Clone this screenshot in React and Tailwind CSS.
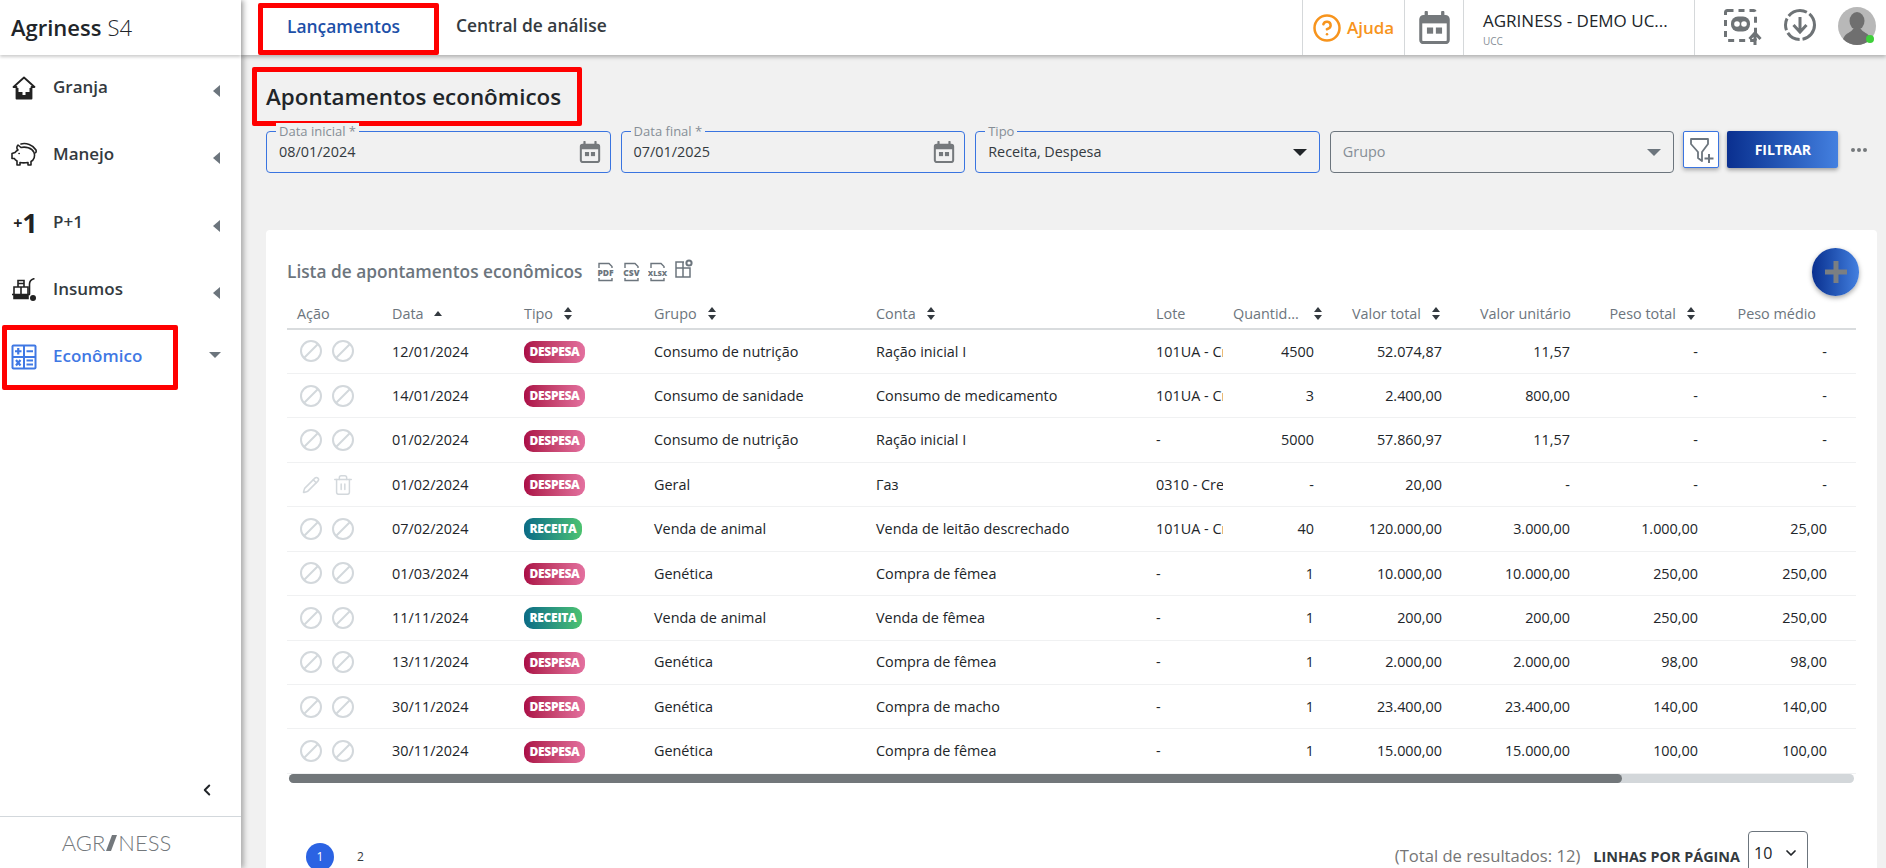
import { CircleHelp, Pencil, Trash2, ChevronDown, ChevronLeft } from 'lucide-react'

const rows = [
  { data: '12/01/2024', tipo: 'DESPESA', grupo: 'Consumo de nutrição', conta: 'Ração inicial I', lote: '101UA - Creche', qtd: '4500', total: '52.074,87', unit: '11,57', peso: '-', medio: '-' },
  { data: '14/01/2024', tipo: 'DESPESA', grupo: 'Consumo de sanidade', conta: 'Consumo de medicamento', lote: '101UA - Creche', qtd: '3', total: '2.400,00', unit: '800,00', peso: '-', medio: '-' },
  { data: '01/02/2024', tipo: 'DESPESA', grupo: 'Consumo de nutrição', conta: 'Ração inicial I', lote: '-', qtd: '5000', total: '57.860,97', unit: '11,57', peso: '-', medio: '-' },
  { data: '01/02/2024', tipo: 'DESPESA', grupo: 'Geral', conta: 'Газ', lote: '0310 - Creche', qtd: '-', total: '20,00', unit: '-', peso: '-', medio: '-', editable: true },
  { data: '07/02/2024', tipo: 'RECEITA', grupo: 'Venda de animal', conta: 'Venda de leitão descrechado', lote: '101UA - Creche', qtd: '40', total: '120.000,00', unit: '3.000,00', peso: '1.000,00', medio: '25,00' },
  { data: '01/03/2024', tipo: 'DESPESA', grupo: 'Genética', conta: 'Compra de fêmea', lote: '-', qtd: '1', total: '10.000,00', unit: '10.000,00', peso: '250,00', medio: '250,00' },
  { data: '11/11/2024', tipo: 'RECEITA', grupo: 'Venda de animal', conta: 'Venda de fêmea', lote: '-', qtd: '1', total: '200,00', unit: '200,00', peso: '250,00', medio: '250,00' },
  { data: '13/11/2024', tipo: 'DESPESA', grupo: 'Genética', conta: 'Compra de fêmea', lote: '-', qtd: '1', total: '2.000,00', unit: '2.000,00', peso: '98,00', medio: '98,00' },
  { data: '30/11/2024', tipo: 'DESPESA', grupo: 'Genética', conta: 'Compra de macho', lote: '-', qtd: '1', total: '23.400,00', unit: '23.400,00', peso: '140,00', medio: '140,00' },
  { data: '30/11/2024', tipo: 'DESPESA', grupo: 'Genética', conta: 'Compra de fêmea', lote: '-', qtd: '1', total: '15.000,00', unit: '15.000,00', peso: '100,00', medio: '100,00' },
]

function HouseIcon() {
  return (
    <svg width="24" height="24" viewBox="0 0 24 24" fill="none">
      <path d="M1.5 11 12 1.5 22.5 11H19.5V22.5H4.5V11Z" stroke="#222" strokeWidth="1.8" strokeLinejoin="round" />
      <path d="M4.5 12H19.5V23H4.5Z" fill="#222" />
      <path d="M6.5 11.5H17.5V16H13.5V19H10.5V16H6.5Z" fill="#fff" />
    </svg>
  )
}

function PigIcon() {
  return (
    <svg width="28" height="26" viewBox="0 0 28 26" fill="none" stroke="#222" strokeWidth="1.6" strokeLinejoin="round" strokeLinecap="round">
      <path d="M8 8C6 6.5 7 4 8 3L11 5.5C15 4.5 22 5.5 24 10.5C25.5 14 24 18 21 19.5V23H18V20.5C15 21 12 21 10 20.5V23H7V19C5.5 18 4.5 17 4.5 16.5H2V11.5L5 10.5C5.8 9.5 6.8 8.7 8 8Z" />
      <path d="M11 2C16 0.5 23 3 26 8C26.5 9.5 26 11 25 11" />
      <path d="M9 11.5H9.2" />
    </svg>
  )
}

function CartIcon() {
  return (
    <svg width="26" height="24" viewBox="0 0 26 24" fill="none" stroke="#222" strokeWidth="1.6">
      <path d="M1 16.5H19M3 20.5H17V16.5H3Z" fill="#222" />
      <path d="M3 16V9H17V16M7 9V2.5H13V9M10 9V16M7 2.5V5.5H13V2.5" />
      <path d="M18.5 16.5V6C18.5 3.5 20 1.5 23.5 0.5" />
      <circle cx="22" cy="20" r="3" fill="#222" stroke="none" />
    </svg>
  )
}

function CalcIcon() {
  return (
    <svg width="26" height="26" viewBox="0 0 26 26" fill="none">
      <rect x="0.5" y="0.5" width="25" height="25" rx="2" fill="#3f78e4" />
      <rect x="2.5" y="2.5" width="9.5" height="9.5" fill="#fff" />
      <rect x="14" y="2.5" width="9.5" height="9.5" fill="#fff" />
      <rect x="2.5" y="14" width="9.5" height="9.5" fill="#fff" />
      <rect x="14" y="14" width="9.5" height="9.5" fill="#fff" />
      <path d="M7.25 4V10.5M4 7.25H10.5M15.5 7.25H22M5 16 9.5 21.5M9.5 16 5 21.5M15.5 16.5H22M15.5 20.5H22" stroke="#3f78e4" strokeWidth="2.2" />
    </svg>
  )
}

function CalendarIcon({ size = 22 }) {
  return (
    <svg width={size} height={size} viewBox="0 0 24 24" fill="none">
      <path d="M6 1V6M18 1V6" stroke="#75797c" strokeWidth="2.4" strokeLinecap="round" />
      <rect x="2" y="4" width="20" height="19" rx="2" stroke="#75797c" strokeWidth="2.2" />
      <rect x="2" y="4" width="20" height="5" fill="#75797c" />
      <rect x="6.5" y="12" width="4.5" height="4.5" fill="#75797c" />
      <rect x="13" y="12" width="4.5" height="4.5" fill="#75797c" />
    </svg>
  )
}

function BanIcon() {
  return (
    <svg width="22" height="22" viewBox="0 0 22 22" fill="none" stroke="#d3d8dc" strokeWidth="2">
      <circle cx="11" cy="11" r="10" />
      <path d="M4 18 18 4" />
    </svg>
  )
}

function SortIcon() {
  return (
    <svg width="8" height="13" viewBox="0 0 8 13" fill="#343a40" className="shrink-0">
      <path d="M4 0 8 5H0Z" />
      <path d="M4 13 0 8H8Z" />
    </svg>
  )
}

function FileIcon({ label }) {
  return (
    <svg width="20" height="20" viewBox="0 0 20 20" fill="none">
      <path d="M3 6V1.5H13L16 4.5V6M3 16V18.5H16V16" stroke="#6c757d" strokeWidth="1.4" />
      <text x="9.5" y="14" textAnchor="middle" fontSize={label === 'XLSX' ? 7.5 : 8.5} fontWeight="800" fill="#6c757d" fontFamily="'Open Sans', sans-serif">{label}</text>
    </svg>
  )
}

function Field({ label, value, active = true, children }) {
  return (
    <div className={`relative flex h-[42px] w-[344.6px] items-center justify-between rounded-[4px] border pl-[12px] pr-[9px] ${active ? 'border-[#3a74e0]' : 'border-[#6c757d]'}`}>
      {label && <span className="absolute -top-[9px] left-[9px] bg-[#f1f1f1] px-[3px] text-[13px] leading-[17px] text-[#868e96]">{label}</span>}
      <span className={`text-[14.4px] ${active ? 'text-[#343a40]' : 'text-[#868e96]'}`}>{value}</span>
      {children}
    </div>
  )
}

function NavItem({ icon, label, active, open }) {
  return (
    <div className="relative flex h-[67.3px] items-start">
      <div className="mr-[5px] mt-[21px] flex h-6 w-[48px] shrink-0 items-center justify-center">{icon}</div>
      <span className={`mt-[21px] text-[17px] font-semibold leading-[22px] ${active ? 'text-[#3f78e4]' : 'text-[#343a40]'}`}>{label}</span>
      {open ? (
        <span className="absolute left-[209px] top-[28px] h-0 w-0 border-x-[6.5px] border-t-[6px] border-x-transparent border-t-[#6c757d]" />
      ) : (
        <span className="absolute left-[213px] top-[30px] h-0 w-0 border-y-[6px] border-r-[7px] border-y-transparent border-r-[#6c757d]" />
      )}
      {active && <span className="absolute left-[2px] top-[1px] h-[65px] w-[176px] rounded-[2px] border-[5px] border-[#ff0000]" />}
    </div>
  )
}

function Badge({ tipo }) {
  if (tipo === 'RECEITA') {
    return <span className="inline-flex h-[22px] w-[58px] items-center justify-center rounded-[9px] bg-gradient-to-r from-[#0b6b85] to-[#4cc26f] text-[12px] font-extrabold tracking-[-0.3px] text-white">RECEITA</span>
  }
  return <span className="inline-flex h-[22px] w-[61px] items-center justify-center rounded-[9px] bg-gradient-to-r from-[#ab0b47] to-[#e3709f] text-[12px] font-extrabold tracking-[-0.3px] text-white">DESPESA</span>
}

function App() {
  return (
    <div className="flex h-screen overflow-hidden bg-[#f1f1f1] font-['Open_Sans',sans-serif] text-[#212529]">
      {/* sidebar */}
      <aside className="z-20 flex w-[241px] shrink-0 flex-col bg-white shadow-[3px_0_5px_rgba(0,0,0,0.28)]">
        <div className="flex h-[55px] shrink-0 items-center pl-[11px] text-[22px] text-[#212529] shadow-[0_2px_3px_rgba(0,0,0,0.2)]">
          <span className="font-semibold">Agriness</span>
          <span className="ml-[6px] font-light">S4</span>
        </div>
        <nav>
          <NavItem icon={<HouseIcon />} label="Granja" />
          <NavItem icon={<PigIcon />} label="Manejo" />
          <NavItem
            icon={
              <span className="ml-[3px] flex items-center font-bold leading-none text-[#222]">
                <span className="text-[16px]">+</span>
                <span className="text-[27px]">1</span>
              </span>
            }
            label="P+1"
          />
          <NavItem icon={<CartIcon />} label="Insumos" />
          <NavItem icon={<CalcIcon />} label="Econômico" active open />
        </nav>
        <div className="mt-auto flex justify-end pb-[17px] pr-[25px]">
          <ChevronLeft size={18} strokeWidth={2.6} className="text-[#212529]" />
        </div>
        <div className="flex h-[52px] shrink-0 items-center justify-center border-t border-[#d3d8dc] pr-[8px] font-['Lato',sans-serif] text-[22px] font-light leading-none text-[#73787c]">
          <span>AGR</span>
          <svg width="11" height="16" viewBox="0 0 11 16" className="mx-[1px]">
            <path d="M6 0H11L5 16H0Z" fill="#73787c" />
          </svg>
          <span>NESS</span>
        </div>
      </aside>

      <div className="flex min-w-0 flex-1 flex-col">
        {/* top bar */}
        <header className="z-10 flex h-[55px] shrink-0 items-stretch bg-white shadow-[0_2px_4px_rgba(0,0,0,0.28)]">
          <div className="ml-[17px] mt-[3px] flex h-[52px] w-[181px] items-center justify-center rounded-[2px] border-[5px] border-[#ff0000] pb-[6px] pr-[10px] text-[17.4px] font-semibold text-[#1d50a8]">
            Lançamentos
          </div>
          <div className="ml-[17px] flex items-center pb-[4px] text-[17.4px] font-semibold text-[#343a40]">Central de análise</div>

          <div className="ml-auto flex w-[102px] items-center gap-[5px] border-l border-[#d5d8da] pl-[9px]">
            <CircleHelp size={30} strokeWidth={2} className="shrink-0 text-[#f7941d]" />
            <span className="text-[17px] font-semibold text-[#f7941d]">Ajuda</span>
          </div>
          <div className="flex w-[59px] items-center justify-center border-l border-[#d5d8da]">
            <CalendarIcon size={33} />
          </div>
          <div className="flex w-[231px] flex-col border-l border-[#d5d8da] pl-[19px] pt-[9px]">
            <span className="text-[17px] leading-[24px] text-[#212529]">AGRINESS - DEMO UC...</span>
            <span className="mt-[2px] text-[10px] leading-[12px] text-[#868e96]">UCC</span>
          </div>
          <div className="flex w-[192px] items-start border-l border-[#d5d8da] pl-[27px] pt-[7px]">
            <svg width="40" height="40" viewBox="0 0 40 40" fill="none">
              <rect x="3.5" y="3.5" width="30" height="30" rx="2" stroke="#6e7376" strokeWidth="3" strokeDasharray="6 5" />
              <rect x="9" y="9.5" width="19" height="15" rx="7" fill="#6e7376" />
              <circle cx="15" cy="17" r="2.8" fill="#fff" />
              <circle cx="22" cy="17" r="2.8" fill="#fff" />
              <path d="M33 38V27M27.5 32 33 26 38.5 32" stroke="#6e7376" strokeWidth="3" />
            </svg>
            <svg width="34" height="34" viewBox="0 0 34 34" fill="none" className="ml-[21px] mt-[1px]">
              <circle cx="17" cy="17" r="14.5" stroke="#6e7376" strokeWidth="3" strokeDasharray="20 3 14 3 12 3 20 3" />
              <path d="M17 9V23M10.5 17 17 24 23.5 17" stroke="#6e7376" strokeWidth="3" />
            </svg>
            <div className="relative ml-[21px] h-[38px] w-[38px] overflow-visible">
              <svg width="38" height="38" viewBox="0 0 38 38">
                <circle cx="19" cy="19" r="19" fill="#b8b8b8" />
                <ellipse cx="19" cy="14" rx="7.5" ry="9" fill="#6f6f6f" />
                <path d="M5 32C8 25 13 26 15 22H23C25 26 30 25 33 32C29 36 24 38 19 38C14 38 9 36 5 32Z" fill="#6f6f6f" />
              </svg>
              <span className="absolute left-[28px] top-[28px] h-[8px] w-[8px] rounded-full bg-[#3ecf3a]" />
            </div>
          </div>
        </header>

        <main className="min-h-0 flex-1 overflow-hidden pl-[25px] pr-[9px]">
          <div className="-ml-[14px] mt-[12px] flex h-[59px] w-[330px] items-center rounded-[2px] border-[5px] border-[#ff0000] pl-[9px]">
            <h1 className="whitespace-nowrap text-[22.4px] font-semibold text-[#212529]">Apontamentos econômicos</h1>
          </div>

          {/* filtros */}
          <div className="mt-[5px] flex items-start gap-[10px]">
            <Field label="Data inicial *" value="08/01/2024"><CalendarIcon /></Field>
            <Field label="Data final *" value="07/01/2025"><CalendarIcon /></Field>
            <Field label="Tipo" value="Receita, Despesa">
              <span className="mr-[3px] h-0 w-0 border-x-[7px] border-t-[7px] border-x-transparent border-t-[#212529]" />
            </Field>
            <Field value="Grupo" active={false}>
              <span className="mr-[3px] h-0 w-0 border-x-[7px] border-t-[7px] border-x-transparent border-t-[#6c757d]" />
            </Field>
            <button className="-ml-[1px] flex h-[37px] w-[36px] items-center justify-center rounded-[2px] border border-[#3a74e0] bg-white shadow-[0_2px_4px_rgba(0,0,0,0.3)]">
              <svg width="28" height="28" viewBox="0 0 28 28" fill="none">
                <path d="M4 3H21V8L15 16V25L11 22V16L4 8Z" stroke="#6c757d" strokeWidth="1.8" strokeLinejoin="round" />
                <path d="M22 18V27M17.5 22.5H26.5" stroke="#6c757d" strokeWidth="2" />
              </svg>
            </button>
            <button className="-ml-[2px] h-[37px] w-[111px] rounded-[2px] bg-gradient-to-r from-[#0a2f8f] to-[#4480e0] text-sm font-bold text-white shadow-[0_2px_4px_rgba(0,0,0,0.35)]">
              FILTRAR
            </button>
            <div className="ml-[3px] mt-[17px] flex gap-[2px]">
              <span className="h-[4px] w-[4px] rounded-full bg-[#75797c]" />
              <span className="h-[4px] w-[4px] rounded-full bg-[#75797c]" />
              <span className="h-[4px] w-[4px] rounded-full bg-[#75797c]" />
            </div>
          </div>

          {/* lista */}
          <section className="relative mt-[57px] rounded-[4px] bg-white px-[21px] pt-[30px]">
            <button className="absolute right-[18px] top-[18px] flex h-[48px] w-[47px] items-center justify-center rounded-full bg-gradient-to-r from-[#0a2f8f] to-[#4480e0] shadow-[0_2px_5px_rgba(0,0,0,0.35)]">
              <svg width="24" height="24" viewBox="0 0 24 24">
                <path d="M12 1V23M1 12H23" stroke="#7b7f82" strokeWidth="5" />
              </svg>
            </button>

            <div className="flex h-[24px] items-center">
              <h2 className="text-[17.3px] font-semibold text-[#6c757d]">Lista de apontamentos econômicos</h2>
              <div className="ml-[13px] flex items-center gap-[6px]">
                <FileIcon label="PDF" />
                <FileIcon label="CSV" />
                <FileIcon label="XLSX" />
                <svg width="20" height="22" viewBox="0 0 20 22" fill="none" className="-mt-[6px]" stroke="#6c757d" strokeWidth="1.5">
                  <path d="M10 4H2V19H16V10H2M9 4V19" />
                  <circle cx="15" cy="5" r="2.6" strokeWidth="2" />
                </svg>
              </div>
            </div>

            <div className="mt-[15px] overflow-hidden">
              <table className="w-full table-fixed border-collapse text-[14.4px]">
                <colgroup>
                  <col className="w-[96px]" />
                  <col className="w-[131px]" />
                  <col className="w-[131px]" />
                  <col className="w-[221px]" />
                  <col className="w-[280px]" />
                  <col className="w-[77px]" />
                  <col className="w-[102px]" />
                  <col className="w-[127px]" />
                  <col className="w-[128px]" />
                  <col className="w-[128px]" />
                  <col className="w-[148px]" />
                </colgroup>
                <thead>
                  <tr className="h-[30px] border-b-2 border-[#d9dcde] text-left text-[#6c757d]">
                    <th className="pl-[10px] font-normal">Ação</th>
                    <th className="pl-[9px] font-normal">
                      <div className="flex items-center gap-[10px]">
                        Data
                        <span className="h-0 w-0 border-x-[4px] border-b-[5px] border-x-transparent border-b-[#343a40]" />
                      </div>
                    </th>
                    <th className="pl-[10px] font-normal"><div className="flex items-center gap-[11px]">Tipo <SortIcon /></div></th>
                    <th className="pl-[9px] font-normal"><div className="flex items-center gap-[11px]">Grupo <SortIcon /></div></th>
                    <th className="pl-[10px] font-normal"><div className="flex items-center gap-[11px]">Conta <SortIcon /></div></th>
                    <th className="pl-[10px] font-normal">Lote</th>
                    <th className="pl-[10px] font-normal"><div className="flex items-center gap-[15px] whitespace-nowrap">Quantid... <SortIcon /></div></th>
                    <th className="pr-[12px] font-normal"><div className="flex items-center justify-end gap-[11px] whitespace-nowrap">Valor total <SortIcon /></div></th>
                    <th className="pr-[9px] text-right font-normal whitespace-nowrap">Valor unitário</th>
                    <th className="pr-[13px] font-normal"><div className="flex items-center justify-end gap-[11px] whitespace-nowrap">Peso total <SortIcon /></div></th>
                    <th className="pr-[40px] text-right font-normal whitespace-nowrap">Peso médio</th>
                  </tr>
                </thead>
                <tbody>
                  {rows.map((row, i) => (
                    <tr key={i} className="h-[44.44px] border-b border-[#f0f1f2]">
                      <td className="pl-[13px]">
                        <div className="flex items-center gap-[10px]">
                          {row.editable ? (
                            <>
                              <span className="flex w-[22px] justify-center"><Pencil size={18} className="text-[#d3d8dc]" /></span>
                              <span className="flex w-[22px] justify-center"><Trash2 size={22} strokeWidth={1.6} className="text-[#d3d8dc]" /></span>
                            </>
                          ) : (
                            <>
                              <BanIcon />
                              <BanIcon />
                            </>
                          )}
                        </div>
                      </td>
                      <td className="pl-[9px]">{row.data}</td>
                      <td className="pl-[10px]"><Badge tipo={row.tipo} /></td>
                      <td className="pl-[9px]">{row.grupo}</td>
                      <td className="pl-[10px]">{row.conta}</td>
                      <td className="overflow-hidden whitespace-nowrap pl-[10px]">{row.lote}</td>
                      <td className="pr-[11px] text-right">{row.qtd}</td>
                      <td className="pr-[10px] text-right">{row.total}</td>
                      <td className="pr-[10px] text-right">{row.unit}</td>
                      <td className="pr-[10px] text-right">{row.peso}</td>
                      <td className="pr-[29px] text-right">{row.medio}</td>
                    </tr>
                  ))}
                </tbody>
              </table>
            </div>

            {/* barra de rolagem da tabela */}
            <div className="ml-[2px] mr-[2px] h-[9px] rounded-full bg-[#d3d7da]">
              <div className="h-full w-[85.2%] rounded-full bg-[#72777a]" />
            </div>

            <div className="mt-[48px] flex h-[52px] items-center justify-between pl-[19px] pr-[48px]">
              <div className="flex items-center text-xs">
                <span className="flex h-[28px] w-[28px] items-center justify-center rounded-full bg-[#2b63e3] text-white">1</span>
                <span className="ml-[23px] text-[#343a40]">2</span>
              </div>
              <div className="flex items-center">
                <span className="text-[16.6px] text-[#757575]">(Total de resultados: 12)</span>
                <span className="ml-[13px] text-[14.4px] font-bold text-[#343a40]">LINHAS POR PÁGINA</span>
                <div className="ml-[8px] flex h-[44px] w-[60px] -translate-y-[4px] items-center justify-between rounded-[4px] border border-[#6c757d] pl-[5px] pr-[8px] text-base">
                  10
                  <ChevronDown size={16} strokeWidth={2.6} className="text-[#212529]" />
                </div>
              </div>
            </div>
          </section>
        </main>
      </div>
    </div>
  )
}

export default App
